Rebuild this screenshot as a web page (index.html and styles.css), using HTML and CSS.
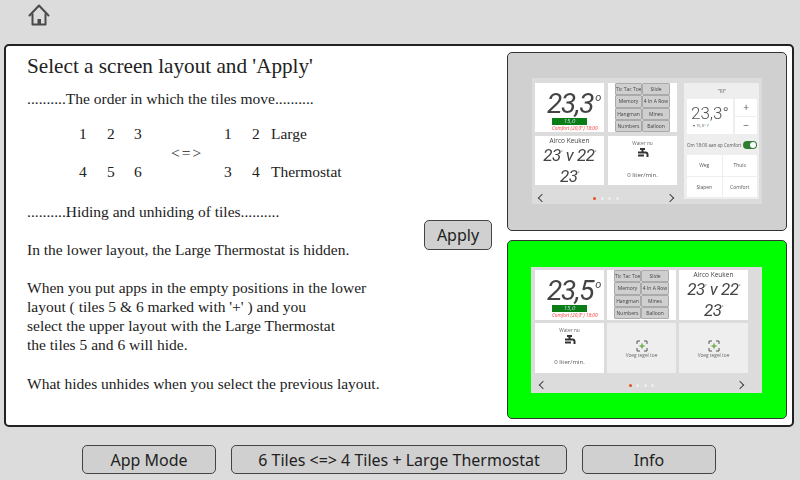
FILE: index.html
```html
<!DOCTYPE html>
<html lang="en">
<head>
<meta charset="utf-8">
<title>Screen layout</title>
<link rel="stylesheet" href="styles.css">
</head>
<body>
<div class="screen">
  <header class="top">
    <svg class="home" width="22" height="24" viewBox="0 0 22 24"><path d="M1.500 12.500 11 2.500l9.500 10" fill="none" stroke="#4a4a4a" stroke-width="2" stroke-linecap="round" stroke-linejoin="round"/><path d="M4.500 10.500V21.500H17.500V10.500" fill="none" stroke="#4a4a4a" stroke-width="2" stroke-linejoin="round"/><path d="M9.500 16h3.500v5.500H9.500z" fill="#4a4a4a"/></svg>
  </header>
  <main class="panel">
    <section class="copy">
      <h1>Select a screen layout and 'Apply'</h1>
      <p class="intro">..........The order in which the tiles move..........</p>
      <div class="order">
        <div class="nums three"><span>1</span><span>2</span><span>3</span><span>4</span><span>5</span><span>6</span></div>
        <div class="swap">&lt;=&gt;</div>
        <div class="nums four"><span>1</span><span>2</span><span class="w">Large</span><span>3</span><span>4</span><span class="w">Thermostat</span></div>
      </div>
      <p class="hide">..........Hiding and unhiding of tiles..........</p>
      <p class="note">In the lower layout, the Large Thermostat is hidden.</p>
      <p class="note">When you put apps in the empty positions in the lower<br>layout ( tiles 5 &amp; 6 marked with '+' ) and you<br>select the upper layout with the Large Thermostat<br>the tiles 5 and 6 will hide.</p>
      <p class="note last">What hides unhides when you select the previous layout.</p>
    </section>
    <div class="apply-col"><button class="btn apply">Apply</button></div>
    <section class="thumbs">
      <div class="thumb grey">
        <div class="shot a">
          <div class="tiles tiles-a">
            <div class="tile thermo"><div class="big">23,3<sup>o</sup></div><div class="bar">15,0</div><div class="red">Comfort (20,0°) 18:00</div></div>
            <div class="tile games">
              <span>Tic Tac Toe</span><span>Slide</span><span>Memory</span><span>4 In A Row</span><span>Hangman</span><span>Mines</span><span>Numbers</span><span>Balloon</span>
            </div>
            <div class="tile airco"><div class="t">Airco Keuken</div><div class="m">23<sup>°</sup> v 22<sup>°</sup></div><div class="m">23<sup>°</sup></div></div>
            <div class="tile water"><div class="s">Water nu</div><svg class="tap" width="12" height="11" viewBox="0 0 12 11"><path d="M3 1h5M5.500 1v3M1 4.500h7.500a2 2 0 0 1 2 2V9M1 7.500h6" fill="none" stroke="#333" stroke-width="2"/></svg><div class="l">0 liter/min.</div></div>
          </div>
          <div class="pager wide-a"><i class="chev prev"></i><div class="dots"><b></b><b></b><b></b><b></b></div><i class="chev next"></i></div>
        </div>
        <div class="side">
          <div class="side-title">"III"</div>
          <div class="side-top">
            <div class="side-temp"><div class="st">23,3°</div><div class="sm">▾ 15,0° <em>Y</em></div></div>
            <div class="pm"><span>+</span><span>−</span></div>
          </div>
          <div class="sw-row"><span>Om 18:00 aan op Comfort</span><i class="sw"></i></div>
          <div class="modes"><span>Weg</span><span>Thuis</span><span>Slapen</span><span>Comfort</span></div>
        </div>
      </div>
      <div class="thumb green">
        <div class="shot b">
          <div class="tiles tiles-b">
            <div class="tile thermo"><div class="big">23,5<sup>o</sup></div><div class="bar">15,0</div><div class="red">Comfort (20,0°) 18:00</div></div>
            <div class="tile games">
              <span>Tic Tac Toe</span><span>Slide</span><span>Memory</span><span>4 In A Row</span><span>Hangman</span><span>Mines</span><span>Numbers</span><span>Balloon</span>
            </div>
            <div class="tile airco"><div class="t">Airco Keuken</div><div class="m">23<sup>°</sup> v 22<sup>°</sup></div><div class="m">23<sup>°</sup></div></div>
            <div class="tile water"><div class="s">Water nu</div><svg class="tap" width="12" height="11" viewBox="0 0 12 11"><path d="M3 1h5M5.500 1v3M1 4.500h7.500a2 2 0 0 1 2 2V9M1 7.500h6" fill="none" stroke="#333" stroke-width="2"/></svg><div class="l">0 liter/min.</div></div>
            <div class="tile empty"><svg width="12" height="12" viewBox="0 0 12 12"><path d="M1 4V1h3M8 1h3v3M11 8v3H8M4 11H1V8" fill="none" stroke="#555"/><path d="M6 3.500v5M3.500 6h5" stroke="#6fb04f" stroke-width="1.500"/></svg><div class="s">Voeg tegel toe</div></div>
            <div class="tile empty"><svg width="12" height="12" viewBox="0 0 12 12"><path d="M1 4V1h3M8 1h3v3M11 8v3H8M4 11H1V8" fill="none" stroke="#555"/><path d="M6 3.500v5M3.500 6h5" stroke="#6fb04f" stroke-width="1.500"/></svg><div class="s">Voeg tegel toe</div></div>
          </div>
          <div class="pager"><i class="chev prev"></i><div class="dots"><b></b><b></b><b></b><b></b></div><i class="chev next"></i></div>
        </div>
      </div>
    </section>
  </main>
  <footer class="foot">
    <button class="btn mode">App Mode</button>
    <button class="btn tiles-btn">6 Tiles &lt;=&gt; 4 Tiles + Large Thermostat</button>
    <button class="btn info">Info</button>
  </footer>
</div>
</body>
</html>
```
FILE: styles.css
```css
* { box-sizing: border-box; }
html, body { margin: 0; padding: 0; }
body { width: 800px; height: 480px; overflow: hidden; background: #dcdcdc; }
.screen { width: 800px; height: 480px; display: flex; flex-direction: column; }
.top { height: 44px; padding: 3px 0 0 28px; }
.home { display: block; }
.panel { margin-left: 4px; width: 790px; height: 383px; background: #fff; border: 2px solid #222; border-radius: 5px; display: flex; }
.copy { width: 400px; padding: 6px 0 0 21px; font-family: "Liberation Serif", serif; color: #222; font-size: 15.500px; }
.copy h1 { margin: 0; font-size: 21.200px; font-weight: 400; line-height: 28px; }
.copy p { margin: 0; line-height: 19px; }
.copy .intro { margin-top: 9px; }
.order { display: flex; margin: 16px 0 0 52px; height: 57px; }
.nums { display: grid; row-gap: 19px; grid-auto-rows: 19px; line-height: 19px; }
.three { grid-template-columns: 28px 27px 27px; }
.four { grid-template-columns: 28px 19px auto; }
.nums span { display: block; }
.swap { width: 53px; margin-left: 10px; padding-top: 19px; line-height: 19px; letter-spacing: 2px; }
.copy .hide { margin-top: 21px; }
.copy .note { margin-top: 19px; }
.copy .last { margin-top: 20px; }
.apply-col { width: 101px; display: flex; justify-content: flex-start; align-items: flex-start; padding: 174px 0 0 18px; }
.btn { font-family: "Noto Sans", sans-serif; font-size: 16px; color: #222; background: #d0d0d0; border: 1px solid #444; border-radius: 5px; padding: 0; }
.apply { width: 68px; height: 30px; }
.thumbs { display: flex; flex-direction: column; gap: 9px; padding-top: 6px; }
.thumb { width: 280px; height: 179px; border-radius: 5px; border: 1px solid #333; padding: 25px 0 0 24px; position: relative; }
.grey { background: #d0d0d0; }
.green { background: #00ff00; padding-top: 26px; padding-left: 23px; }
.shot { background: #dcdcdc; width: 230px; height: 126px; padding: 5px 3px 0; font-family: "Open Sans", sans-serif; filter: blur(.35px); }
.tiles { display: grid; grid-template-columns: repeat(2, 69px); grid-auto-rows: 49px; gap: 4px; }
.tiles-b { grid-template-columns: repeat(3, 69px); grid-auto-rows: 50px; gap: 3px; }
.shot.b { width: 231px; padding: 3px 4px 0; }
.tile { background: #fff; position: relative; text-align: center; overflow: hidden; color: #444; }
.thermo { padding-top: 6px; }
.big { font: italic 28px/29px "Roboto", sans-serif; letter-spacing: -1.200px; color: #444; text-align: left; padding-left: 12px; }
.big sup { font-size: 11px; line-height: 0; vertical-align: 12px; margin-left: 2px; }
.bar { width: 35px; height: 7px; background: #0a7d16; color: #cde; font: italic 6px/7px "Open Sans", sans-serif; margin: 0 auto; }
.red { color: #f33; font: italic 4.800px/7px "Open Sans", sans-serif; white-space: nowrap; text-align: left; padding-left: 17px; }
.games { display: grid; grid-template-columns: 27px 28px; grid-auto-rows: 12.250px; justify-content: center; }
.games span { background: #cfcfcf; border: 1px solid #aaa; border-radius: 1px; font: 5px/10px "Open Sans", sans-serif; color: #444; white-space: nowrap; text-align: center; overflow: hidden; }
.airco .t { font-size: 6.500px; line-height: 8px; padding-top: 1px; box-sizing: content-box; }
.airco .m { font: italic 17px/21px "Roboto", sans-serif; letter-spacing: -.500px; color: #444; }
.airco sup { font-size: 5px; line-height: 0; }
.water { padding-top: 4px; }
.s { font-size: 4.800px; line-height: 7px; color: #666; }
.tap { display: block; margin: 1px auto 0 29px; }
.l { font-size: 6px; line-height: 8px; margin-top: 12px; color: #555; }
.empty { background: #eee; padding-top: 17px; }
.empty svg { display: block; margin: 0 auto; }
.pager { height: 20px; display: flex; align-items: center; justify-content: space-between; padding: 0 15px 0 5px; margin-top: 2px; }
.wide-a { width: 138px; padding: 0 0 0 4px; margin-top: 3px; }
.dots { display: flex; gap: 4.500px; }
.dots b { width: 3px; height: 3px; border-radius: 50%; background: #eee; display: block; }
.dots b:first-child { background: #e8501a; }
.chev { width: 6px; height: 6px; display: block; border-left: 1px solid #444; border-bottom: 1px solid #444; }
.prev { transform: rotate(45deg); }
.next { transform: rotate(225deg); }
.side { position: absolute; left: 176px; top: 30px; width: 75px; height: 116px; background: #eee; padding: 0 2px 0 3px; font-family: "Open Sans", sans-serif; color: #555; filter: blur(.35px); }
.side-title { text-align: center; font-size: 5px; line-height: 16px; }
.side-top { display: flex; gap: 2px; height: 35px; }
.side-temp { width: 46px; background: #fff; text-align: center; padding-top: 4px; }
.st { font: 300 17px/20px "Roboto", sans-serif; }
.sm { font-size: 4px; line-height: 6px; text-align: left; padding-left: 6px; }
.sm em { color: #5a5; font-style: normal; }
.pm { display: grid; grid-auto-rows: 17px; gap: 1px; flex: 1; }
.pm span { background: #fff; text-align: center; font-size: 10px; line-height: 17px; }
.sw-row { display: flex; justify-content: space-between; align-items: center; height: 21px; font-size: 4.500px; white-space: nowrap; }
.sw { width: 14px; height: 8px; border-radius: 4px; background: #2d7d32; display: block; margin-left: 2px; position: relative; }
.sw::after { content: ""; position: absolute; right: 1px; top: 1px; width: 6px; height: 6px; background: #fff; border-radius: 50%; }
.modes { display: grid; grid-template-columns: 1fr 1fr; grid-auto-rows: 20.500px; gap: 1px; }
.modes span { background: #fff; text-align: center; font-size: 5px; line-height: 20px; }
.foot { display: flex; padding: 18px 0 0 82px; gap: 15px; }
.foot .btn { height: 29px; }
.mode { width: 134px; }
.tiles-btn { width: 336px; }
.info { width: 134px; }
```
